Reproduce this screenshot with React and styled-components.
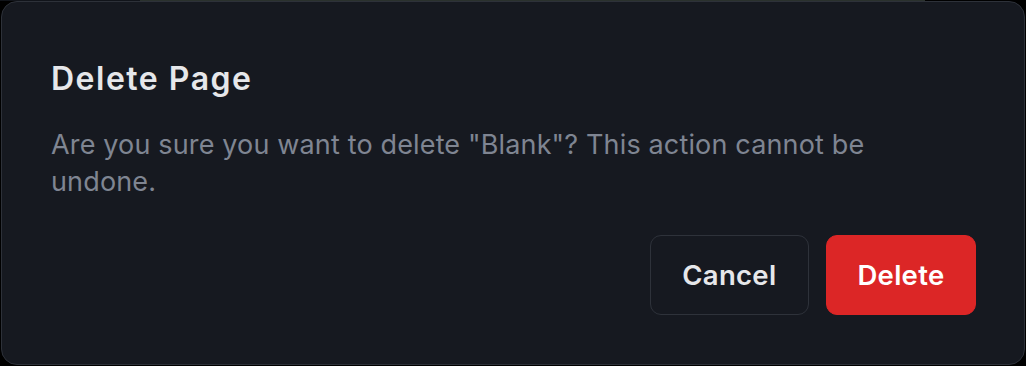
import React from "react";
import styled, { createGlobalStyle } from "styled-components";

const Global = createGlobalStyle`
  html, body {
    margin: 0;
    padding: 0;
    width: 1026px;
    height: 366px;
    overflow: hidden;
    background:
      linear-gradient(to right, #11141a 0 140px, #2a312d 140px 925px, #000 925px) top left / 100% 1px no-repeat,
      #000;
    font-family: Inter, "Noto Sans", "Liberation Sans", sans-serif;
    -webkit-font-smoothing: antialiased;
  }
  #root {
    padding: 1px;
  }
`;

const Dialog = styled.div`
  box-sizing: border-box;
  width: 1024px;
  height: 364px;
  background: #161920;
  border: 1px solid #2d3139;
  border-radius: 16px;
  padding: 57px 48px 48px 49px;
  display: flex;
  flex-direction: column;
`;

const Title = styled.h2`
  margin: 0;
  font-size: 32px;
  line-height: 40px;
  font-weight: 600;
  color: #e6e7ea;
  letter-spacing: 1.5px;
`;

const Description = styled.p`
  margin: 27px 0 0 0;
  max-width: 850px;
  font-size: 27px;
  line-height: 37px;
  font-weight: 400;
  color: #7f8592;
  letter-spacing: 0.15px;
`;

const Footer = styled.div`
  margin-top: 35px;
  display: flex;
  justify-content: flex-end;
  gap: 17px;
`;

const Button = styled.button`
  box-sizing: border-box;
  height: 80px;
  padding: 0 ${(p) => (p.$danger ? "30.5px" : "31.5px")};
  border-radius: 11px;
  font-family: inherit;
  font-size: 27.5px;
  font-weight: 600;
  letter-spacing: 0.3px;
  cursor: pointer;
  border: 1px solid ${(p) => (p.$danger ? "#dc2626" : "#2e323a")};
  background: ${(p) => (p.$danger ? "#dc2626" : "#161920")};
  color: ${(p) => (p.$danger ? "#ffffff" : "#e6e7ea")};
`;

export default function App() {
  return (
    <>
      <Global />
      <Dialog role="dialog">
        <Title>Delete Page</Title>
        <Description>
          Are you sure you want to delete "Blank"? This action cannot be undone.
        </Description>
        <Footer>
          <Button>Cancel</Button>
          <Button $danger>Delete</Button>
        </Footer>
      </Dialog>
    </>
  );
}
